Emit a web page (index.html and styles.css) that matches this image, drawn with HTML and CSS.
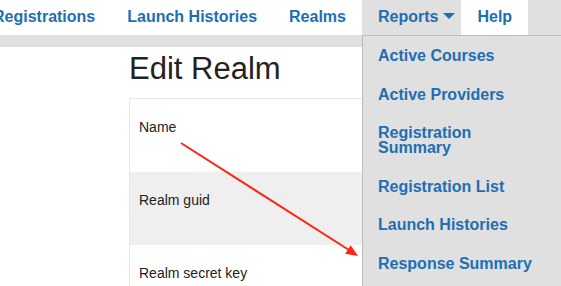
FILE: index.html
```html
<!DOCTYPE html>
<html lang="en">
<head>
    <meta charset="UTF-8">
    <meta name="viewport" content="width=device-width, initial-scale=1.0">
    <title>Edit Realm</title>
    <link rel="stylesheet" href="styles.css">
</head>
<body>
    <header class="topbar">
        <nav class="menu">
            <a class="menu-item" href="#">Registrations</a>
            <a class="menu-item" href="#">Launch Histories</a>
            <a class="menu-item" href="#">Realms</a>
            <div class="menu-item reports">
                <a href="#">Reports<span class="caret"></span></a>
                <ul class="dropdown">
                    <li><a href="#">Active Courses</a></li>
                    <li><a href="#">Active Providers</a></li>
                    <li><a href="#">Registration Summary</a></li>
                    <li><a href="#">Registration List</a></li>
                    <li><a href="#">Launch Histories</a></li>
                    <li><a href="#">Response Summary</a></li>
                </ul>
            </div>
            <a class="menu-item" href="#">Help</a>
        </nav>
    </header>

    <div class="page">
        <h1>Edit Realm</h1>
        <div class="form-box">
            <div class="field-row">Name</div>
            <div class="field-row alt">Realm guid</div>
            <div class="field-row">Realm secret key</div>
        </div>
    </div>

    <!-- annotation arrow -->
    <svg class="note-arrow" width="561" height="286" viewBox="0 0 561 286">
        <line x1="181" y1="143" x2="349" y2="250" stroke="#ff2414" stroke-width="2"/>
        <polygon points="358,256 345.2,253.7 350.6,245.3" fill="#ff2414"/>
    </svg>
</body>
</html>
```

FILE: styles.css
```css
body {
    margin: 0;
    font-family: "Liberation Sans", Arial, sans-serif;
    color: #222;
    background: #fff;
    overflow: hidden;
}
a {
    text-decoration: none;
    color: #1e6eb4;
}
.topbar {
    background: #e0e0e0;
    padding-bottom: 12px;
}
.menu {
    display: flex;
    margin-left: -23px;
}
.menu-item {
    display: block;
    background: #fff;
    padding: 0 16px 2px;
    line-height: 33px;
    font-size: 16px;
    font-weight: bold;
    white-space: nowrap;
}
.reports {
    position: relative;
    background: #e0e0e0;
    padding-right: 6px;
}
.caret {
    display: inline-block;
    margin-left: 5px;
    width: 0;
    height: 0;
    border-left: 6px solid transparent;
    border-right: 6px solid transparent;
    border-top: 6px solid #1e6eb4;
    vertical-align: 3px;
}
.dropdown {
    position: absolute;
    top: 35px;
    left: 0;
    width: 199px;
    margin: 0;
    padding: 0 0 40px;
    list-style: none;
    background: #e0e0e0;
    border-top: 1px solid #bcbcbc;
    border-left: 1px solid #bcbcbc;
    white-space: normal;
}
.dropdown a {
    display: block;
    padding: 12px 15px 11.5px;
    line-height: 15px;
}
.page {
    padding-left: 129px;
}
h1 {
    margin: 5px 0 12px;
    font-size: 31px;
    font-weight: normal;
    line-height: 34px;
    color: #222;
}
.form-box {
    width: 420px;
    border: 1px solid #e6e6e6;
}
.field-row {
    padding: 20px 9px 37px;
    font-size: 14px;
    line-height: 16px;
}
.field-row.alt {
    background: #efefef;
}
.note-arrow {
    position: absolute;
    top: 0;
    left: 0;
    pointer-events: none;
}
```
